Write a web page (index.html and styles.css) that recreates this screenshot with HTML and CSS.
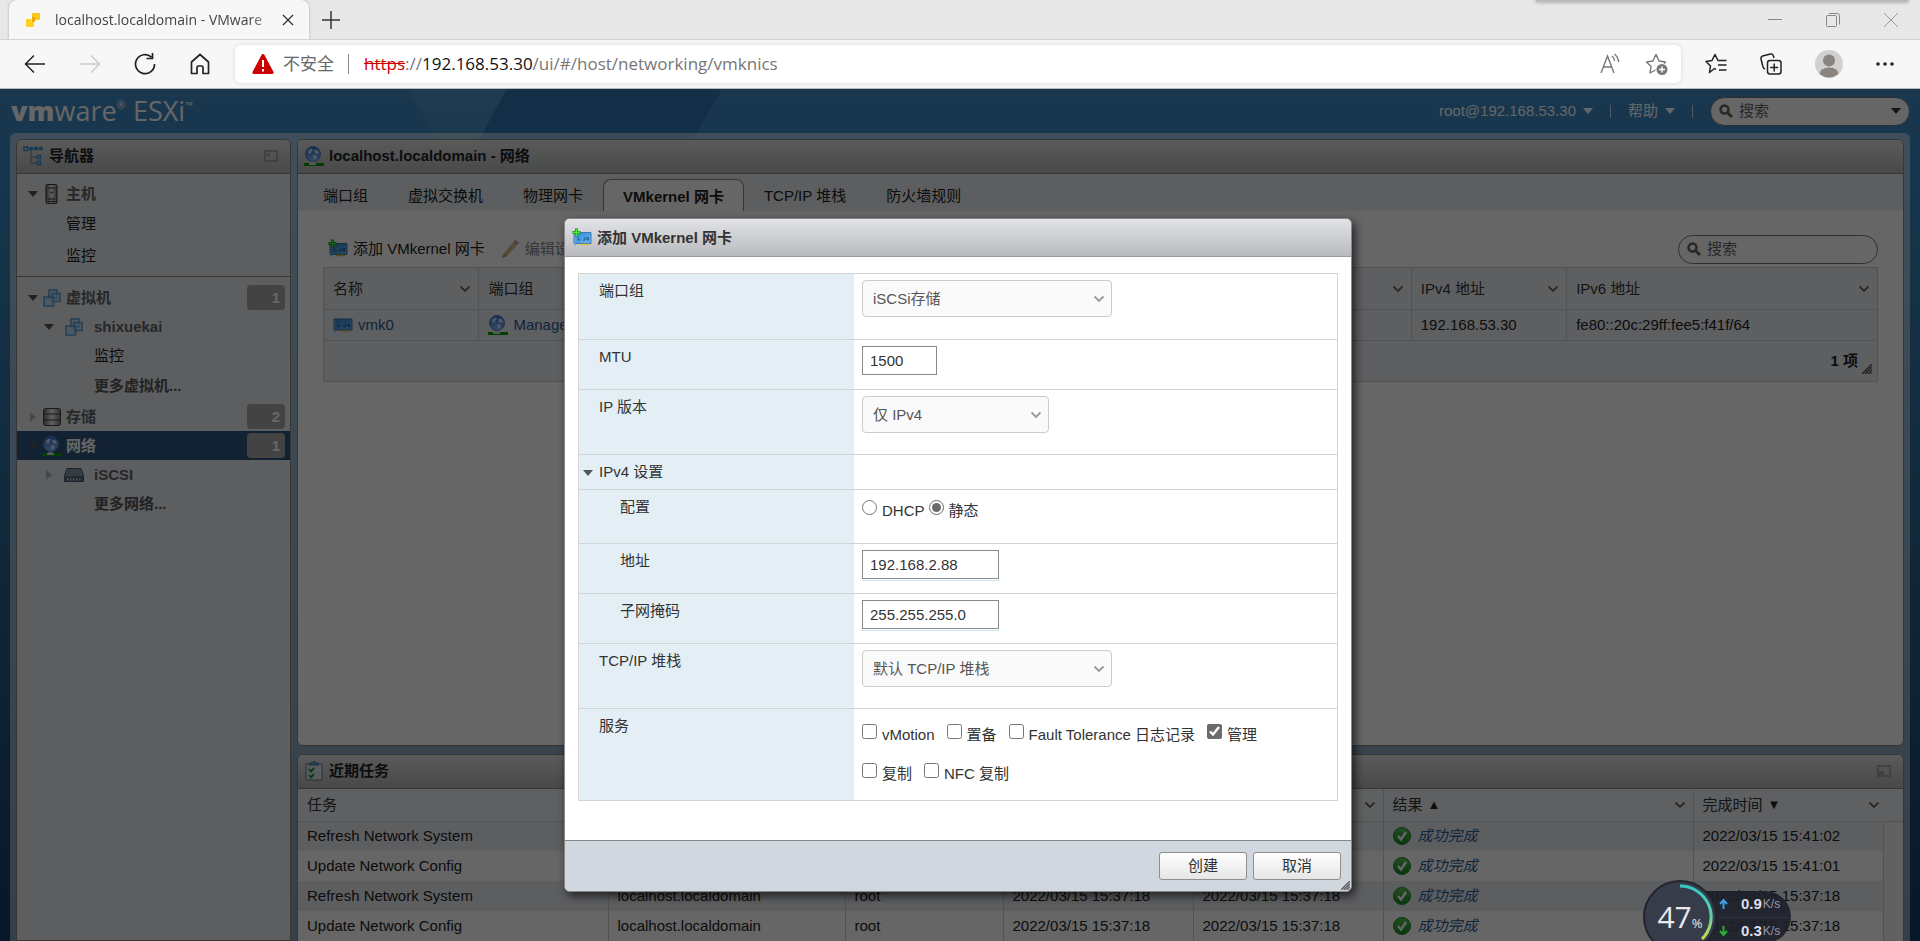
FILE: index.html
```html
<!DOCTYPE html>
<html lang="zh-CN">
<head>
<meta charset="utf-8">
<title>localhost.localdomain - VMware ESXi</title>
<link rel="stylesheet" href="styles.css">
</head>
<body>
<svg width="0" height="0" class="defs" aria-hidden="true">
  <defs>
    <linearGradient id="globeFill" x1="0" y1="0" x2="0" y2="1"><stop offset="0" stop-color="#2f6fd4"/><stop offset="1" stop-color="#86b8f5"/></linearGradient>
    <linearGradient id="okFill" x1="0" y1="0" x2="0" y2="1"><stop offset="0" stop-color="#5fc35a"/><stop offset="1" stop-color="#138a1c"/></linearGradient>
    <linearGradient id="nicFill" x1="0" y1="0" x2="1" y2="1"><stop offset="0" stop-color="#2f86d6"/><stop offset="1" stop-color="#6cb6f0"/></linearGradient>
    <linearGradient id="metal" x1="0" y1="0" x2="1" y2="0"><stop offset="0" stop-color="#6b6b6b"/><stop offset=".5" stop-color="#efefef"/><stop offset="1" stop-color="#777"/></linearGradient>
    <linearGradient id="gauge" x1="0" y1="0" x2="0" y2="1"><stop offset="0" stop-color="#38c6c8"/><stop offset=".5" stop-color="#57cfae"/><stop offset="1" stop-color="#c6dc4e"/></linearGradient>
    <symbol id="globe" viewBox="0 0 20 20">
      <circle cx="9" cy="8" r="7.500" fill="url(#globeFill)" stroke="#4a7cc8"/>
      <path d="M4.500 4l3-1.500 1.500 1.500-1.500 1.500-1 2.500-2.500-1.500zM11 3.500l3 1 1 2.500-1.500 1-2.500-1-1-2zM9 9l3 .5 1 1.500-2 3-1.500-1z" fill="#c9e0fb"/>
      <path d="M0 17h20v3H0z" fill="#0c9a0c"/><path d="M5 17.500q3-3.500 7 0v1.500H5z" fill="#d8e2ec"/>
    </symbol>
    <symbol id="nic" viewBox="0 0 20 16">
      <path d="M1 2h18v11H1z" fill="url(#nicFill)" stroke="#3a78b8"/><path d="M2 3v12" stroke="#6fa0cf" stroke-width="1.500"/>
      <path d="M5 7v2.500h2M12.500 6.500v3h-2M15 7h1.500v2.500H15z" fill="none" stroke="#1c5a9c"/><path d="M8 14h9" stroke="#e2bd3a" stroke-width="1.500"/>
    </symbol>
    <symbol id="nicAdd" viewBox="0 0 20 20">
      <path d="M2 4.500h17v11H2z" fill="url(#nicFill)" stroke="#3a78b8"/><path d="M3 6v11.500" stroke="#6fa0cf" stroke-width="1.500"/>
      <path d="M6.500 9.500V12h2M13 9v3h-2M15 9.500h1.500V12H15z" fill="none" stroke="#1c5a9c"/><path d="M8 16.500h9" stroke="#e2bd3a" stroke-width="1.500"/>
      <path d="M4.500 .5v8M.5 4.500h8" stroke="#1c8e17" stroke-width="3"/><path d="M4.500 1v7M1 4.500h7" stroke="#4be838" stroke-width="1.500"/>
    </symbol>
    <symbol id="vms" viewBox="0 0 18 18">
      <g fill="#a8d4f4" fill-opacity=".6" stroke="#5aa0d8" stroke-width="1.500"><path d="M6 1h8v8H6z"/><path d="M9 4.500h8v8H9z"/><path d="M1 8h9.500v9H1z"/></g>
    </symbol>
    <symbol id="ok" viewBox="0 0 18 18"><circle cx="9" cy="9" r="8.500" fill="url(#okFill)" stroke="#1c8424"/><path d="M5 9l3 3.500L13 5" fill="none" stroke="#fff" stroke-width="2.500"/></symbol>
    <symbol id="chev" viewBox="0 0 12 8"><path d="M1.500 1.500L6 6l4.500-4.500" fill="none" stroke="currentColor" stroke-width="1.800"/></symbol>
    <symbol id="down" viewBox="0 0 10 6"><path d="M0 0h10L5 6z" fill="currentColor"/></symbol>
    <symbol id="right" viewBox="0 0 6 10"><path d="M0 0v10l6-5z" fill="currentColor"/></symbol>
    <symbol id="mag" viewBox="0 0 14 14"><circle cx="5.500" cy="5.500" r="4" fill="none" stroke="#666" stroke-width="2.500"/><path d="M8.500 8.500l4.500 4.500" stroke="#666" stroke-width="3"/></symbol>
    <symbol id="grip" viewBox="0 0 10 10"><path d="M0 10L10 0M3 10l7-7M6 10l4-4M9 10l1-1" stroke="#555" stroke-width="1.500"/></symbol>
  </defs>
</svg>

<header class="browser">
  <div class="tabstrip">
    <div class="tab">
      <svg width="16" height="16" viewBox="0 0 16 16"><path d="M8 1h6q1 0 1 1v5q0 1-1 1h-4V5H7V2q0-1 1-1z" fill="#ffc61a"/><path d="M2 7h4.500v3H9v4q0 1-1 1H2q-1 0-1-1V8q0-1 1-1z" fill="#ffd21f"/><path d="M7 5h3v5H7z" fill="#e9a80c"/></svg>
      <span class="tab-title">localhost.localdomain - VMware</span>
      <button class="plain" aria-label="关闭标签页"><svg width="12" height="12" viewBox="0 0 12 12"><path d="M1 1l10 10M11 1L1 11" stroke="#333" stroke-width="1.300"/></svg></button>
    </div>
    <button class="plain new-tab" aria-label="新建标签页"><svg width="18" height="18" viewBox="0 0 18 18"><path d="M9 0v18M0 9h18" stroke="#333" stroke-width="1.500"/></svg></button>
    <div class="window-controls">
      <button class="plain" aria-label="最小化"><svg width="14" height="14" viewBox="0 0 14 14"><path d="M0 6.500h14" stroke="#888"/></svg></button>
      <button class="plain" aria-label="还原"><svg width="14" height="14" viewBox="0 0 14 14" fill="none" stroke="#888"><rect x=".5" y="2.500" width="10" height="11" rx="1"/><path d="M3 .5h8.500q2 0 2 2v9"/></svg></button>
      <button class="plain" aria-label="关闭"><svg width="14" height="14" viewBox="0 0 14 14"><path d="M0 0l14 14M14 0L0 14" stroke="#999"/></svg></button>
    </div>
    <span class="top-shadow"></span>
  </div>
  <div class="toolbar">
    <nav class="nav-buttons">
      <button class="plain" aria-label="后退"><svg width="22" height="22" viewBox="0 0 22 22" fill="none" stroke="#222" stroke-width="1.500"><path d="M21 11H1.500M10 2.500L1.500 11l8.500 8.500"/></svg></button>
      <button class="plain" aria-label="前进"><svg width="22" height="22" viewBox="0 0 22 22" fill="none" stroke="#ccc" stroke-width="1.500"><path d="M1 11h19.500M12 2.500l8.500 8.500-8.500 8.500"/></svg></button>
      <button class="plain" aria-label="刷新"><svg width="22" height="22" viewBox="0 0 22 22" fill="none" stroke="#222" stroke-width="1.700"><path d="M20.500 11A9.500 9.500 0 1 1 17.500 4.200M12.500 5.500H18.500V0"/></svg></button>
      <button class="plain" aria-label="主页"><svg width="22" height="22" viewBox="0 0 22 22" fill="none" stroke="#222" stroke-width="1.700"><path d="M2.500 9L11 1.500 19.500 9v11.500h-5.500v-6q0-1.500-1.500-1.500h-3q-1.500 0-1.500 1.500v6H2.500z" stroke-linejoin="round"/></svg></button>
    </nav>
    <div class="address">
      <svg width="22" height="20" viewBox="0 0 22 20"><path d="M11 0q1 0 1.500 1l9 17q.5 2-1.500 2H2q-2 0-1.500-2l9-17Q10 0 11 0z" fill="#c00"/><path d="M11 6v7M11 15v2.500" stroke="#fff" stroke-width="2"/></svg>
      <span class="insecure">不安全</span>
      <span class="sep"></span>
      <span class="url"><s>https</s>://<b>192.168.53.30</b>/ui/#/host/networking/vmknics</span>
      <button class="plain" aria-label="朗读此页"><svg width="22" height="22" viewBox="0 0 22 22" fill="none" stroke="#777" stroke-width="1.400"><path d="M1 20L7.500 3 14 20M3.500 14h8M12 3q2.500 2 2.500 5M14.500 1q4 3.500 4 8"/></svg></button>
      <button class="plain" aria-label="添加到收藏夹"><svg width="24" height="24" viewBox="0 0 24 24" fill="none" stroke="#777" stroke-width="1.400"><path d="M10.500 18l-5.500 3 1-6.500L1.500 10l6.300-1L11 2.500 14 9l6.500 1-1.500 1.500" stroke-linejoin="round"/><circle cx="17" cy="17.500" r="5.500" fill="#777" stroke="none"/><path d="M17 14.500v6M14 17.500h6" stroke="#fff" stroke-width="1.500"/></svg></button>
    </div>
    <div class="tools">
      <button class="plain" aria-label="收藏夹"><svg width="22" height="22" viewBox="0 0 22 22" fill="none" stroke="#222" stroke-width="1.500"><path d="M11 16.500L9.500 15.500 4.500 19.500l1-6.500L1 8.500l6-1L10 1.500 13 7.500h8.500M13 12h8.500M14 17h7.500" stroke-linejoin="round"/></svg></button>
      <button class="plain" aria-label="集锦"><svg width="22" height="22" viewBox="0 0 22 22" fill="none" stroke="#222" stroke-width="1.500"><rect x="7.500" y="7.500" width="13.500" height="13.500" rx="2.500"/><path d="M14.200 10.500v8M10.200 14.500h8M5 16q-1.500-.5-2-2L1 6q-.5-2 1.500-3l8-2q2-.5 2.800 1.500L14 5"/></svg></button>
      <button class="plain" aria-label="个人资料"><svg width="28" height="28" viewBox="0 0 28 28"><circle cx="14" cy="14" r="14" fill="#d2d0ce"/><circle cx="14" cy="10.500" r="6" fill="#8a8480"/><path d="M4.500 24q1-6.500 9.500-6.500t9.500 6.500Q14 31 4.500 24z" fill="#8a8480"/></svg></button>
      <button class="plain" aria-label="更多"><svg width="18" height="4" viewBox="0 0 18 4" fill="#222"><circle cx="2" cy="2" r="1.800"/><circle cx="9" cy="2" r="1.800"/><circle cx="16" cy="2" r="1.800"/></svg></button>
    </div>
  </div>
</header>

<div class="page">
  <svg class="facets" viewBox="0 0 1920 90" preserveAspectRatio="xMinYMin slice" aria-hidden="true">
    <path d="M409 0h98l-50 90z" fill="#fff" fill-opacity=".07"/><path d="M507 0h215l-52 90H457z" fill="#063a86" fill-opacity=".25"/>
  </svg>
  <div class="masthead">
    <div class="logo"><span class="vm">vm</span><span class="ware">ware</span><sup>®</sup><span class="esxi">ESXi</span><sup>™</sup></div>
    <div class="account">
      <a href="#user">root@192.168.53.30 <svg width="10" height="6"><use href="#down"/></svg></a>
      <span class="bar"></span>
      <a href="#help">帮助 <svg width="10" height="6"><use href="#down"/></svg></a>
      <span class="bar"></span>
      <label class="search"><svg width="14" height="14"><use href="#mag"/></svg><input type="text" placeholder="搜索" aria-label="搜索"><svg width="10" height="6"><use href="#down"/></svg></label>
    </div>
  </div>

  <div class="workspace">
    <aside class="panel navigator">
      <h2 class="panel-head">
        <svg width="20" height="20" viewBox="0 0 20 20" fill="none" stroke-width="1.500"><path d="M4 3h14M8 4v13h6M8 11h6" stroke="#8a98a6"/><g stroke="#2f8fd0" fill="#d6ecfa"><path d="M1 1h3.500v3.500H1zM7 1.500h2v2H7zM12 1.500h2v2h-2zM17 1.500h2v2h-2zM14.500 9.500h3v3h-3zM14.500 15.500h3v3h-3z"/></g></svg>
        <span>导航器</span>
        <svg class="end" width="14" height="12" viewBox="0 0 14 12"><path d="M1 1h12v10H1z" fill="none" stroke="#a4a4a4" stroke-width="2"/><path d="M3 3h3v3H3z" fill="#a4a4a4"/></svg>
      </h2>
      <ul class="tree">
        <li class="l1"><svg class="tw" width="10" height="6"><use href="#down"/></svg><svg class="ic" width="20" height="20" viewBox="0 0 20 20"><rect x="4" y=".5" width="11" height="19" rx="1.500" fill="url(#metal)" stroke="#333"/><path d="M6 4h7M6 15h7M6 17.500h7" stroke="#333"/><circle cx="9.500" cy="8.500" r="1" fill="#333"/></svg><span class="strong">主机</span></li>
        <li class="l1 leaf tall"><span>管理</span></li>
        <li class="l1 leaf tall last"><span>监控</span></li>
        <li class="l1"><svg class="tw" width="10" height="6"><use href="#down"/></svg><svg class="ic" width="18" height="18"><use href="#vms"/></svg><span class="strong">虚拟机</span><span class="badge">1</span></li>
        <li class="l2"><svg class="tw" width="10" height="6"><use href="#down"/></svg><svg class="ic" width="18" height="18"><use href="#vms"/></svg><span class="strong">shixuekai</span></li>
        <li class="l2 leaf"><span>监控</span></li>
        <li class="l2 leaf tall"><span class="more">更多虚拟机...</span></li>
        <li class="l1"><svg class="tw faint" width="6" height="10"><use href="#right"/></svg><svg class="ic" width="18" height="18" viewBox="0 0 18 18"><rect x=".5" y=".5" width="17" height="17" rx="2" fill="url(#metal)" stroke="#444"/><path d="M1 6h16M1 12h16" stroke="#444"/></svg><span class="strong">存储</span><span class="badge">2</span></li>
        <li class="l1 selected"><svg class="tw" width="10" height="6"><use href="#down"/></svg><svg class="ic" width="20" height="20"><use href="#globe"/></svg><span class="strong">网络</span><span class="badge">1</span></li>
        <li class="l2"><svg class="tw faint" width="6" height="10"><use href="#right"/></svg><svg class="ic" width="20" height="14" viewBox="0 0 20 14"><path d="M3 .5h14l2.500 7v6H.5v-6z" fill="#8295a8" stroke="#4a5866"/><path d="M1 8h18v5H1z" fill="#5a6c80"/><path d="M3 11.500h14" stroke="#c8d4e0" stroke-width="2" stroke-dasharray="1.500 1.500"/></svg><span class="strong">iSCSI</span></li>
        <li class="l2 leaf"><span class="more">更多网络...</span></li>
      </ul>
    </aside>

    <main class="center">
      <section class="panel network">
        <h1 class="panel-head"><svg width="20" height="20"><use href="#globe"/></svg><span>localhost.localdomain - 网络</span></h1>
        <nav class="tabs">
          <a href="#pg">端口组</a><a href="#vsw">虚拟交换机</a><a href="#pnic">物理网卡</a><a href="#vmk" class="active">VMkernel 网卡</a><a href="#stack">TCP/IP 堆栈</a><a href="#fw">防火墙规则</a>
        </nav>
        <div class="content">
          <div class="actions">
            <button class="plain action"><svg width="20" height="20"><use href="#nicAdd"/></svg>添加 VMkernel 网卡</button>
            <button class="plain action off"><svg width="19" height="20" viewBox="0 0 19 20"><path d="M1 19l2-5L14 1l4 3L6 17z" fill="#d8bc88"/><path d="M1 19l2-5 3 3z" fill="#a89c8c"/><path d="M12.500 3l3.500 3 2-2-4-3z" fill="#b9a09a"/></svg>编辑设置</button>
            <label class="search"><svg width="14" height="14"><use href="#mag"/></svg><input type="text" placeholder="搜索" aria-label="搜索网卡"></label>
          </div>
          <table class="nics">
            <colgroup><col class="w10"><col class="w20"><col class="w20"><col class="w20"><col class="w10"><col class="w20"></colgroup>
            <thead><tr>
              <th><div>名称<svg width="12" height="8"><use href="#chev"/></svg></div></th>
              <th><div>端口组<svg width="12" height="8"><use href="#chev"/></svg></div></th>
              <th><div>TCP/IP 堆栈<svg width="12" height="8"><use href="#chev"/></svg></div></th>
              <th><div>服务<svg width="12" height="8"><use href="#chev"/></svg></div></th>
              <th><div>IPv4 地址<svg width="12" height="8"><use href="#chev"/></svg></div></th>
              <th><div>IPv6 地址<svg width="12" height="8"><use href="#chev"/></svg></div></th>
            </tr></thead>
            <tbody><tr>
              <td><a href="#vmk0"><svg width="20" height="16"><use href="#nic"/></svg>vmk0</a></td>
              <td><a href="#mgmt"><svg width="20" height="20"><use href="#globe"/></svg>Management Network</a></td>
              <td></td><td></td><td>192.168.53.30</td><td>fe80::20c:29ff:fee5:f41f/64</td>
            </tr></tbody>
            <tfoot><tr><td colspan="6"><div class="count"><b>1 项</b><svg width="10" height="10"><use href="#grip"/></svg></div></td></tr></tfoot>
          </table>
        </div>
      </section>

      <section class="panel tasks">
        <h2 class="panel-head">
          <svg width="20" height="20" viewBox="0 0 20 20"><path d="M2 3h16v16H2z" fill="#dfe6ec" stroke="#6a7a88"/><path d="M5 4h10l-2-2.500h-1.500L10 0 8.500 1.500H7z" fill="#5aa2cc" stroke="#3a7ca6"/><path d="M5 8l2 2.500L10 7M5 14l2 2.500L10 13" fill="none" stroke="#219a2c" stroke-width="2"/></svg>
          <span>近期任务</span>
          <svg class="end" width="14" height="12" viewBox="0 0 14 12"><path d="M1 1h12v10H1z" fill="none" stroke="#a4a4a4" stroke-width="2"/><path d="M2 6h5v5H2z" fill="#a4a4a4"/></svg>
        </h2>
        <table class="tasklist">
          <colgroup><col class="c1"><col class="c2"><col class="c3"><col class="c4"><col class="c4"><col class="c5"><col class="c4"><col></colgroup>
          <thead><tr>
            <th>任务</th><th>目标</th><th>启动者</th><th>已排队</th>
            <th><div>启动时间<svg width="12" height="8"><use href="#chev"/></svg></div></th>
            <th><div>结果 <i>▲</i><svg width="12" height="8"><use href="#chev"/></svg></div></th>
            <th colspan="2"><div class="wide">完成时间 <i>▼</i><svg width="12" height="8"><use href="#chev"/></svg></div></th>
          </tr></thead>
          <tbody>
            <tr><td>Refresh Network System</td><td>localhost.localdomain</td><td>root</td><td>2022/03/15 15:41:02</td><td>2022/03/15 15:41:02</td><td><a href="#t1"><svg width="18" height="18"><use href="#ok"/></svg><em>成功完成</em></a></td><td>2022/03/15 15:41:02</td><td></td></tr>
            <tr><td>Update Network Config</td><td>localhost.localdomain</td><td>root</td><td>2022/03/15 15:41:01</td><td>2022/03/15 15:41:01</td><td><a href="#t2"><svg width="18" height="18"><use href="#ok"/></svg><em>成功完成</em></a></td><td>2022/03/15 15:41:01</td><td></td></tr>
            <tr><td>Refresh Network System</td><td>localhost.localdomain</td><td>root</td><td>2022/03/15 15:37:18</td><td>2022/03/15 15:37:18</td><td><a href="#t3"><svg width="18" height="18"><use href="#ok"/></svg><em>成功完成</em></a></td><td>2022/03/15 15:37:18</td><td></td></tr>
            <tr><td>Update Network Config</td><td>localhost.localdomain</td><td>root</td><td>2022/03/15 15:37:18</td><td>2022/03/15 15:37:18</td><td><a href="#t4"><svg width="18" height="18"><use href="#ok"/></svg><em>成功完成</em></a></td><td>2022/03/15 15:37:18</td><td></td></tr>
          </tbody>
        </table>
      </section>
    </main>
  </div>

  <div class="scrim">
    <form class="dialog" role="dialog" aria-labelledby="dlg-title">
      <h2 class="dialog-head"><svg width="20" height="20"><use href="#nicAdd"/></svg><span id="dlg-title">添加 VMkernel 网卡</span></h2>
      <div class="dialog-body">
        <div class="fields">
          <div class="row big"><label for="pg">端口组</label><div><span class="pick"><select id="pg"><option>iSCSi存储</option></select><svg width="12" height="8"><use href="#chev"/></svg></span></div></div>
          <div class="row"><label for="mtu">MTU</label><div><input class="text short" id="mtu" type="text" value="1500"></div></div>
          <div class="row big"><label for="ver">IP 版本</label><div><span class="pick narrow"><select id="ver"><option>仅 IPv4</option></select><svg width="12" height="8"><use href="#chev"/></svg></span></div></div>
          <div class="row slim"><span class="lbl group"><svg width="10" height="6"><use href="#down"/></svg>IPv4 设置</span><div></div></div>
          <div class="row mid"><span class="lbl sub">配置</span><div class="radios"><label><input type="radio" name="cfg">DHCP</label><label><input type="radio" name="cfg" checked>静态</label></div></div>
          <div class="row"><label class="sub" for="ip">地址</label><div><span class="lined"><input class="text" id="ip" type="text" value="192.168.2.88"></span></div></div>
          <div class="row"><label class="sub" for="mask">子网掩码</label><div><span class="lined"><input class="text" id="mask" type="text" value="255.255.255.0"></span></div></div>
          <div class="row big"><label for="stack">TCP/IP 堆栈</label><div><span class="pick"><select id="stack"><option>默认 TCP/IP 堆栈</option></select><svg width="12" height="8"><use href="#chev"/></svg></span></div></div>
          <div class="row services"><span class="lbl">服务</span><div class="checks">
            <div><label><input type="checkbox">vMotion</label><label><input type="checkbox">置备</label><label><input type="checkbox">Fault Tolerance 日志记录</label><label><input type="checkbox" checked>管理</label></div>
            <div><label><input type="checkbox">复制</label><label><input type="checkbox">NFC 复制</label></div>
          </div></div>
        </div>
      </div>
      <div class="dialog-foot"><button type="button">创建</button><button type="button">取消</button><svg class="corner" width="9" height="9" viewBox="0 0 10 10"><use href="#grip"/></svg></div>
    </form>
  </div>

  <div class="monitor">
    <div class="speeds">
      <span><svg width="9" height="10" viewBox="0 0 9 10"><path d="M4.500 10V2M1 5l3.500-4L8 5" fill="none" stroke="#3aa0e0" stroke-width="2"/></svg><b>0.9</b><small>K/s</small></span>
      <span><svg width="9" height="10" viewBox="0 0 9 10"><path d="M4.500 0v8M1 5l3.500 4L8 5" fill="none" stroke="#2aae3a" stroke-width="2"/></svg><b>0.3</b><small>K/s</small></span>
    </div>
    <div class="dial">
      <svg width="74" height="74" viewBox="0 0 74 74"><circle cx="37" cy="37" r="36" fill="#363c4a" stroke="#22252f" stroke-width="2"/><path d="M37 6a31 31 0 0 1 22 53" fill="none" stroke="url(#gauge)" stroke-width="3"/></svg>
      <span class="value">47<small>%</small></span>
    </div>
  </div>
</div>
</body>
</html>
```
FILE: styles.css
```css
* { box-sizing: border-box; }

body {
  margin: 0;
  height: 100vh;
  display: flex;
  flex-direction: column;
  overflow: hidden;
  font: 15px/20px "Liberation Sans", Arial, "Noto Sans CJK SC", sans-serif;
  color: #333;
}

h1, h2, ul { margin: 0; padding: 0; font-size: 15px; }
ul { list-style: none; }
a { color: inherit; text-decoration: none; }
input, select, button { font: inherit; color: inherit; }
svg { flex: none; display: block; }
.defs { position: absolute; }

.plain {
  display: flex;
  align-items: center;
  padding: 0;
  border: 0;
  background: none;
}

/* Browser frame */
.browser { flex: none; font-family: "Open Sans", "Noto Sans CJK SC", sans-serif; }

.tabstrip {
  position: relative;
  display: flex;
  height: 40px;
  padding-left: 9px;
  background: #e8e8e8;
  border-bottom: 1px solid #d4d4d4;
  overflow: hidden;
}

.tab {
  display: flex;
  align-items: center;
  width: 300px;
  height: 40px;
  padding: 0 15px 0 16px;
  background: #f7f7f7;
  border-radius: 8px 8px 0 0;
  box-shadow: 0 0 3px #0004;
}

.tab-title {
  flex: 1;
  margin: 0 12px 0 14px;
  white-space: nowrap;
  font-size: 14px;
  color: #444;
  mask-image: linear-gradient(90deg, #000 90%, #0006);
}

.new-tab { margin: 0 auto 0 13px; }
.window-controls { display: flex; gap: 44px; padding-right: 22px; }

.top-shadow {
  position: absolute;
  top: -8px;
  right: 12px;
  width: 372px;
  height: 10px;
  background: #bbb;
  box-shadow: 0 0 4px #999;
}

.toolbar {
  display: flex;
  align-items: center;
  height: 49px;
  padding: 0 26px 0 24px;
  background: #f7f7f7;
  border-bottom: 1px solid #b8b8b8;
}

.nav-buttons { display: flex; gap: 33px; width: 211px; }

.address {
  flex: 1;
  display: flex;
  align-items: center;
  height: 38px;
  padding: 0 12px 0 17px;
  background: #fff;
  border-radius: 6px;
  box-shadow: 0 0 4px #0002;
  font-size: 17px;
  color: #767676;
}

.insecure { margin-left: 9px; color: #666; }
.sep { width: 1px; height: 20px; margin: 0 15px 0 14px; background: #888; }
.url { flex: 1; }
.url s { color: #c00; }
.url b { font-weight: 400; color: #111; }
.address .plain + .plain { margin-left: 23px; }
.tools { display: flex; align-items: center; gap: 33px; padding-left: 24px; }

/* ESXi client */
.page {
  position: relative;
  flex: 1;
  min-height: 0;
  display: flex;
  flex-direction: column;
  overflow: hidden;
  background: linear-gradient(#3f8cc6, #2a6896 50%, #153a66);
}

.facets { position: absolute; top: 0; left: 0; width: 100%; height: 90px; }

.masthead {
  position: relative;
  display: flex;
  align-items: center;
  justify-content: space-between;
  height: 44px;
  padding: 0 10px 0 11px;
  color: #fff;
}

.logo { display: flex; font-family: "Open Sans", sans-serif; font-size: 27px; line-height: 32px; }
.logo sup { font-size: 10px; line-height: 20px; }
.vm { font-weight: 800; }
.esxi { margin-left: 8px; }

.account { display: flex; align-items: center; }
.account a { display: flex; align-items: center; gap: 7px; }
.bar { width: 1px; height: 13px; margin: 0 17px; background: #cde; }

.search {
  display: flex;
  align-items: center;
  gap: 6px;
  width: 200px;
  height: 29px;
  padding: 0 8px;
  background: #fff;
  border: 1px solid #777;
  border-radius: 15px;
  color: #333;
}

.search input { flex: 1; min-width: 0; padding: 0; border: 0; background: none; }
.search input::placeholder { color: #666; opacity: 1; }

.workspace {
  position: relative;
  flex: 1;
  min-height: 0;
  display: flex;
  gap: 6px;
  margin: 0 10px;
  padding: 6px 6px 0;
  background: #ffffff80;
  border-radius: 6px 6px 0 0;
}

.panel {
  background: #fff;
  border: 1px solid #888;
  border-radius: 6px;
  overflow: hidden;
}

.panel-head {
  display: flex;
  align-items: center;
  gap: 5px;
  height: 34px;
  padding: 0 12px 2px 6px;
  background: linear-gradient(#e2e2e4, #b4b6b8);
  border-bottom: 1px solid #888;
  color: #222;
}

.end { margin-left: auto; }

.navigator { flex: none; width: 275px; background: #e6eaee; border-radius: 6px 6px 0 0; }
.navigator .panel-head { gap: 6px; }

.tree { padding-top: 5px; }
.tree li {
  display: flex;
  align-items: center;
  height: 29px;
  padding: 0 5px 0 11px;
  color: #222;
}
.tree .l2 { padding-left: 27px; }
.tree .leaf { padding-left: 49px; }
.tree .l2.leaf { padding-left: 77px; }
.tree .tall { height: 32px; }
.tree .last { height: 37px; padding-bottom: 5px; margin-bottom: 6px; border-bottom: 1px solid #888; }
.tw { width: 10px; color: #555; }
.faint { color: #b0b4b8; }
.ic { width: 20px; margin: 0 4px; }
.l2 .ic { margin: 0 10px; }
.strong { font-weight: 700; color: #5f6367; }
.more { font-weight: 700; color: #555; }

.badge {
  width: 38px;
  height: 25px;
  margin-left: auto;
  padding-right: 5px;
  background: #a8a8a8;
  border-radius: 4px;
  color: #fff;
  font-weight: 700;
  line-height: 25px;
  text-align: right;
}

.tree .selected { background: #2d5680; }
.selected .strong { color: #fff; }
.selected .tw { color: #555; }

.center { flex: 1; min-width: 0; display: flex; flex-direction: column; gap: 8px; }
.network { flex: 1; min-height: 0; }

.tabs { display: flex; align-items: flex-end; height: 37px; padding-left: 5px; background: #e6eaee; }
.tabs a { height: 32px; padding: 0 20px; line-height: 34px; color: #222; }
.tabs .active {
  padding: 0 19px;
  background: #fff;
  border: 1px solid #888;
  border-bottom: 0;
  border-radius: 8px 8px 0 0;
  font-weight: 700;
}

.content { padding: 23px 25px; }
.actions { display: flex; align-items: center; gap: 16px; height: 33px; padding-left: 5px; padding-bottom: 3px; }
.action { gap: 5px; color: #222; }
.off { color: #888; }
.actions .search { margin-left: auto; }

table { width: 100%; border-collapse: collapse; table-layout: fixed; }
th, td { overflow: hidden; padding: 0 9px; font-weight: 400; text-align: left; white-space: nowrap; }
th div { display: flex; align-items: center; gap: 5px; }
th svg { margin-left: auto; color: #666; }
th i { font-size: 13px; font-style: normal; color: #222; }
td a { display: flex; align-items: center; gap: 5px; color: #2b5a92; }
td { color: #222; }

.w10 { width: 10%; }
.w20 { width: 20%; }
.nics { background: #eaeef2; }
.nics th, .nics td { border: 1px solid #c8ccd0; }
.nics th { height: 42px; padding-right: 7px; }
.nics td { height: 31px; }
.nics tfoot td { height: 41px; }
.count { display: flex; justify-content: flex-end; align-items: center; gap: 4px; }
.count svg { margin-top: 16px; margin-right: -4px; }

.tasks { flex: none; border-bottom: 0; border-radius: 6px 6px 0 0; }
.c1 { width: 310px; }
.c2 { width: 237px; }
.c3 { width: 158px; }
.c4 { width: 190px; }
.c5 { width: 310px; }
.tasklist th { height: 32px; padding: 0 7px 0 9px; background: #eceff2; border-bottom: 1px solid #c8ccd0; }
.tasklist th + th { border-left: 1px solid #ccc; }
.tasklist .wide { padding-right: 16px; }
.tasklist td { height: 30px; border-right: 1px solid #ccc; }
.tasklist td:last-child { background: #f2f2f2; border-right: 0; }
.tasklist tbody tr:nth-child(odd) { background: #e8ecf0; }
.tasklist a { gap: 7px; }

/* Dialog */
.scrim {
  position: absolute;
  inset: 0;
  display: flex;
  justify-content: center;
  align-items: flex-start;
  padding: 129px 4px 0 0;
  background: #0009;
}

.dialog {
  width: 788px;
  max-width: 90%;
  background: #fff;
  border: 1px solid #888;
  border-radius: 6px;
  box-shadow: 3px 4px 10px #000a;
  overflow: hidden;
}

.dialog-head {
  display: flex;
  align-items: center;
  gap: 5px;
  height: 38px;
  padding: 0 7px;
  background: linear-gradient(#e2e3e6, #b8babd);
  border-bottom: 1px solid #999;
}

.dialog-body { padding: 16px 13px 39px; }
.fields { border: 1px solid #d4d4d4; }
.row { display: grid; grid-template-columns: 275px 1fr; height: 50px; }
.row + .row { border-top: 1px solid #d4d4d4; }
.big { height: 65px; }
.mid { height: 54px; }
.slim { height: 35px; }
.services { height: 92px; }
.row > :first-child { padding: 7px 0 0 20px; background: #e3eff5; }
.row > .sub { padding-left: 41px; }
.row > .group { display: flex; align-items: flex-start; gap: 6px; padding-left: 4px; }
.group svg { margin-top: 8px; color: #555; }
.row > div { padding: 6px 8px 0; }

.pick { display: grid; width: 250px; }
.pick.narrow { width: 187px; }
.pick select {
  grid-area: 1 / 1;
  height: 37px;
  padding: 0 10px;
  appearance: none;
  background: #fafafa;
  border: 1px solid #ccc;
  border-radius: 4px;
  color: #565656;
}
.pick svg { grid-area: 1 / 1; place-self: center end; margin-right: 7px; color: #999; pointer-events: none; }

.text {
  display: block;
  width: 137px;
  height: 29px;
  padding: 0 7px;
  border: 1px solid #888;
  border-radius: 0;
  background: #fff;
}
.short { width: 75px; }
.lined { display: block; width: 137px; padding-bottom: 1px; border-bottom: 1px solid #c8e6f0; }

.radios, .checks > div { display: flex; }
.radios { gap: 4px; }
.checks > div { gap: 12px; }
.checks > div + div { margin-top: 17px; }
.row .radios { padding-top: 10px; }
.row .checks { padding-top: 15px; }
.radios label, .checks label { display: flex; align-items: flex-start; gap: 5px; line-height: 22px; }
.dialog [type="radio"], .dialog [type="checkbox"] { width: 15px; height: 15px; margin: 0; accent-color: #6b6b6b; }

.dialog-foot {
  position: relative;
  display: flex;
  justify-content: flex-end;
  gap: 6px;
  padding: 11px 10px;
  background: #d0d7df;
  border-top: 1px solid #888;
}
.dialog-foot button {
  width: 88px;
  height: 28px;
  padding: 0;
  background: linear-gradient(#fff, #e6e6e6);
  border: 1px solid #8f8f8f;
  border-radius: 3px;
}
.corner { position: absolute; right: 1px; bottom: 1px; }

/* Speed monitor floating over the page */
.monitor { position: absolute; right: 129px; bottom: -13px; display: flex; flex-direction: row-reverse; align-items: center; }
.dial { position: relative; margin-right: -46px; z-index: 1; }
.value {
  position: absolute;
  inset: 0;
  font: 30px/74px "Open Sans", sans-serif;
  color: #e8eaee;
  text-align: center;
}
.value small { font-size: 13px; }
.speeds {
  width: 120px;
  height: 52px;
  padding-left: 48px;
  background: #1c1f29e6;
  border-radius: 26px;
}
.speeds span { display: flex; align-items: center; gap: 1px; height: 26px; font-size: 15px; color: #dde; }
.speeds span + span { border-top: 1px solid #2e3240; }
.speeds b { margin-left: 12px; }
.speeds small { font-size: 12px; color: #99a; }
```
